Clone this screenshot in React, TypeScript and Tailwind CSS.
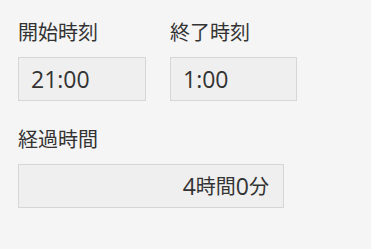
export default function App() {
  const font = { fontFamily: '"Noto Sans CJK JP", "Noto Sans", sans-serif' }
  const num = { fontFamily: '"Open Sans", "Noto Sans CJK JP", sans-serif' }
  return (
    <div className="min-h-screen bg-[#f5f5f5] text-[#333333] pl-[18px] pt-[17px]" style={font}>
      <div className="flex gap-6">
        <div className="flex flex-col">
          <label className="text-[20px] leading-[30px] mb-[10px]">開始時刻</label>
          <div className="w-[128px] h-[44px] border border-[#d6d6d6] bg-[#efefef] px-3 flex items-center text-[23px]" style={num}>21:00</div>
        </div>
        <div className="flex flex-col">
          <label className="text-[20px] leading-[30px] mb-[10px]">終了時刻</label>
          <div className="w-[127px] h-[44px] border border-[#d6d6d6] bg-[#efefef] px-3 flex items-center text-[23px]" style={num}>1:00</div>
        </div>
      </div>
      <div className="flex flex-col mt-[23px]">
        <label className="text-[20px] leading-[30px] mb-[10px]">経過時間</label>
        <div className="w-[266px] h-[44px] border border-[#d6d6d6] bg-[#efefef] px-[14px] flex items-center justify-end text-[23px]" style={num}>
          4<span className="text-[20px]" style={font}>時間</span>0<span className="text-[20px]" style={font}>分</span>
        </div>
      </div>
    </div>
  )
}
